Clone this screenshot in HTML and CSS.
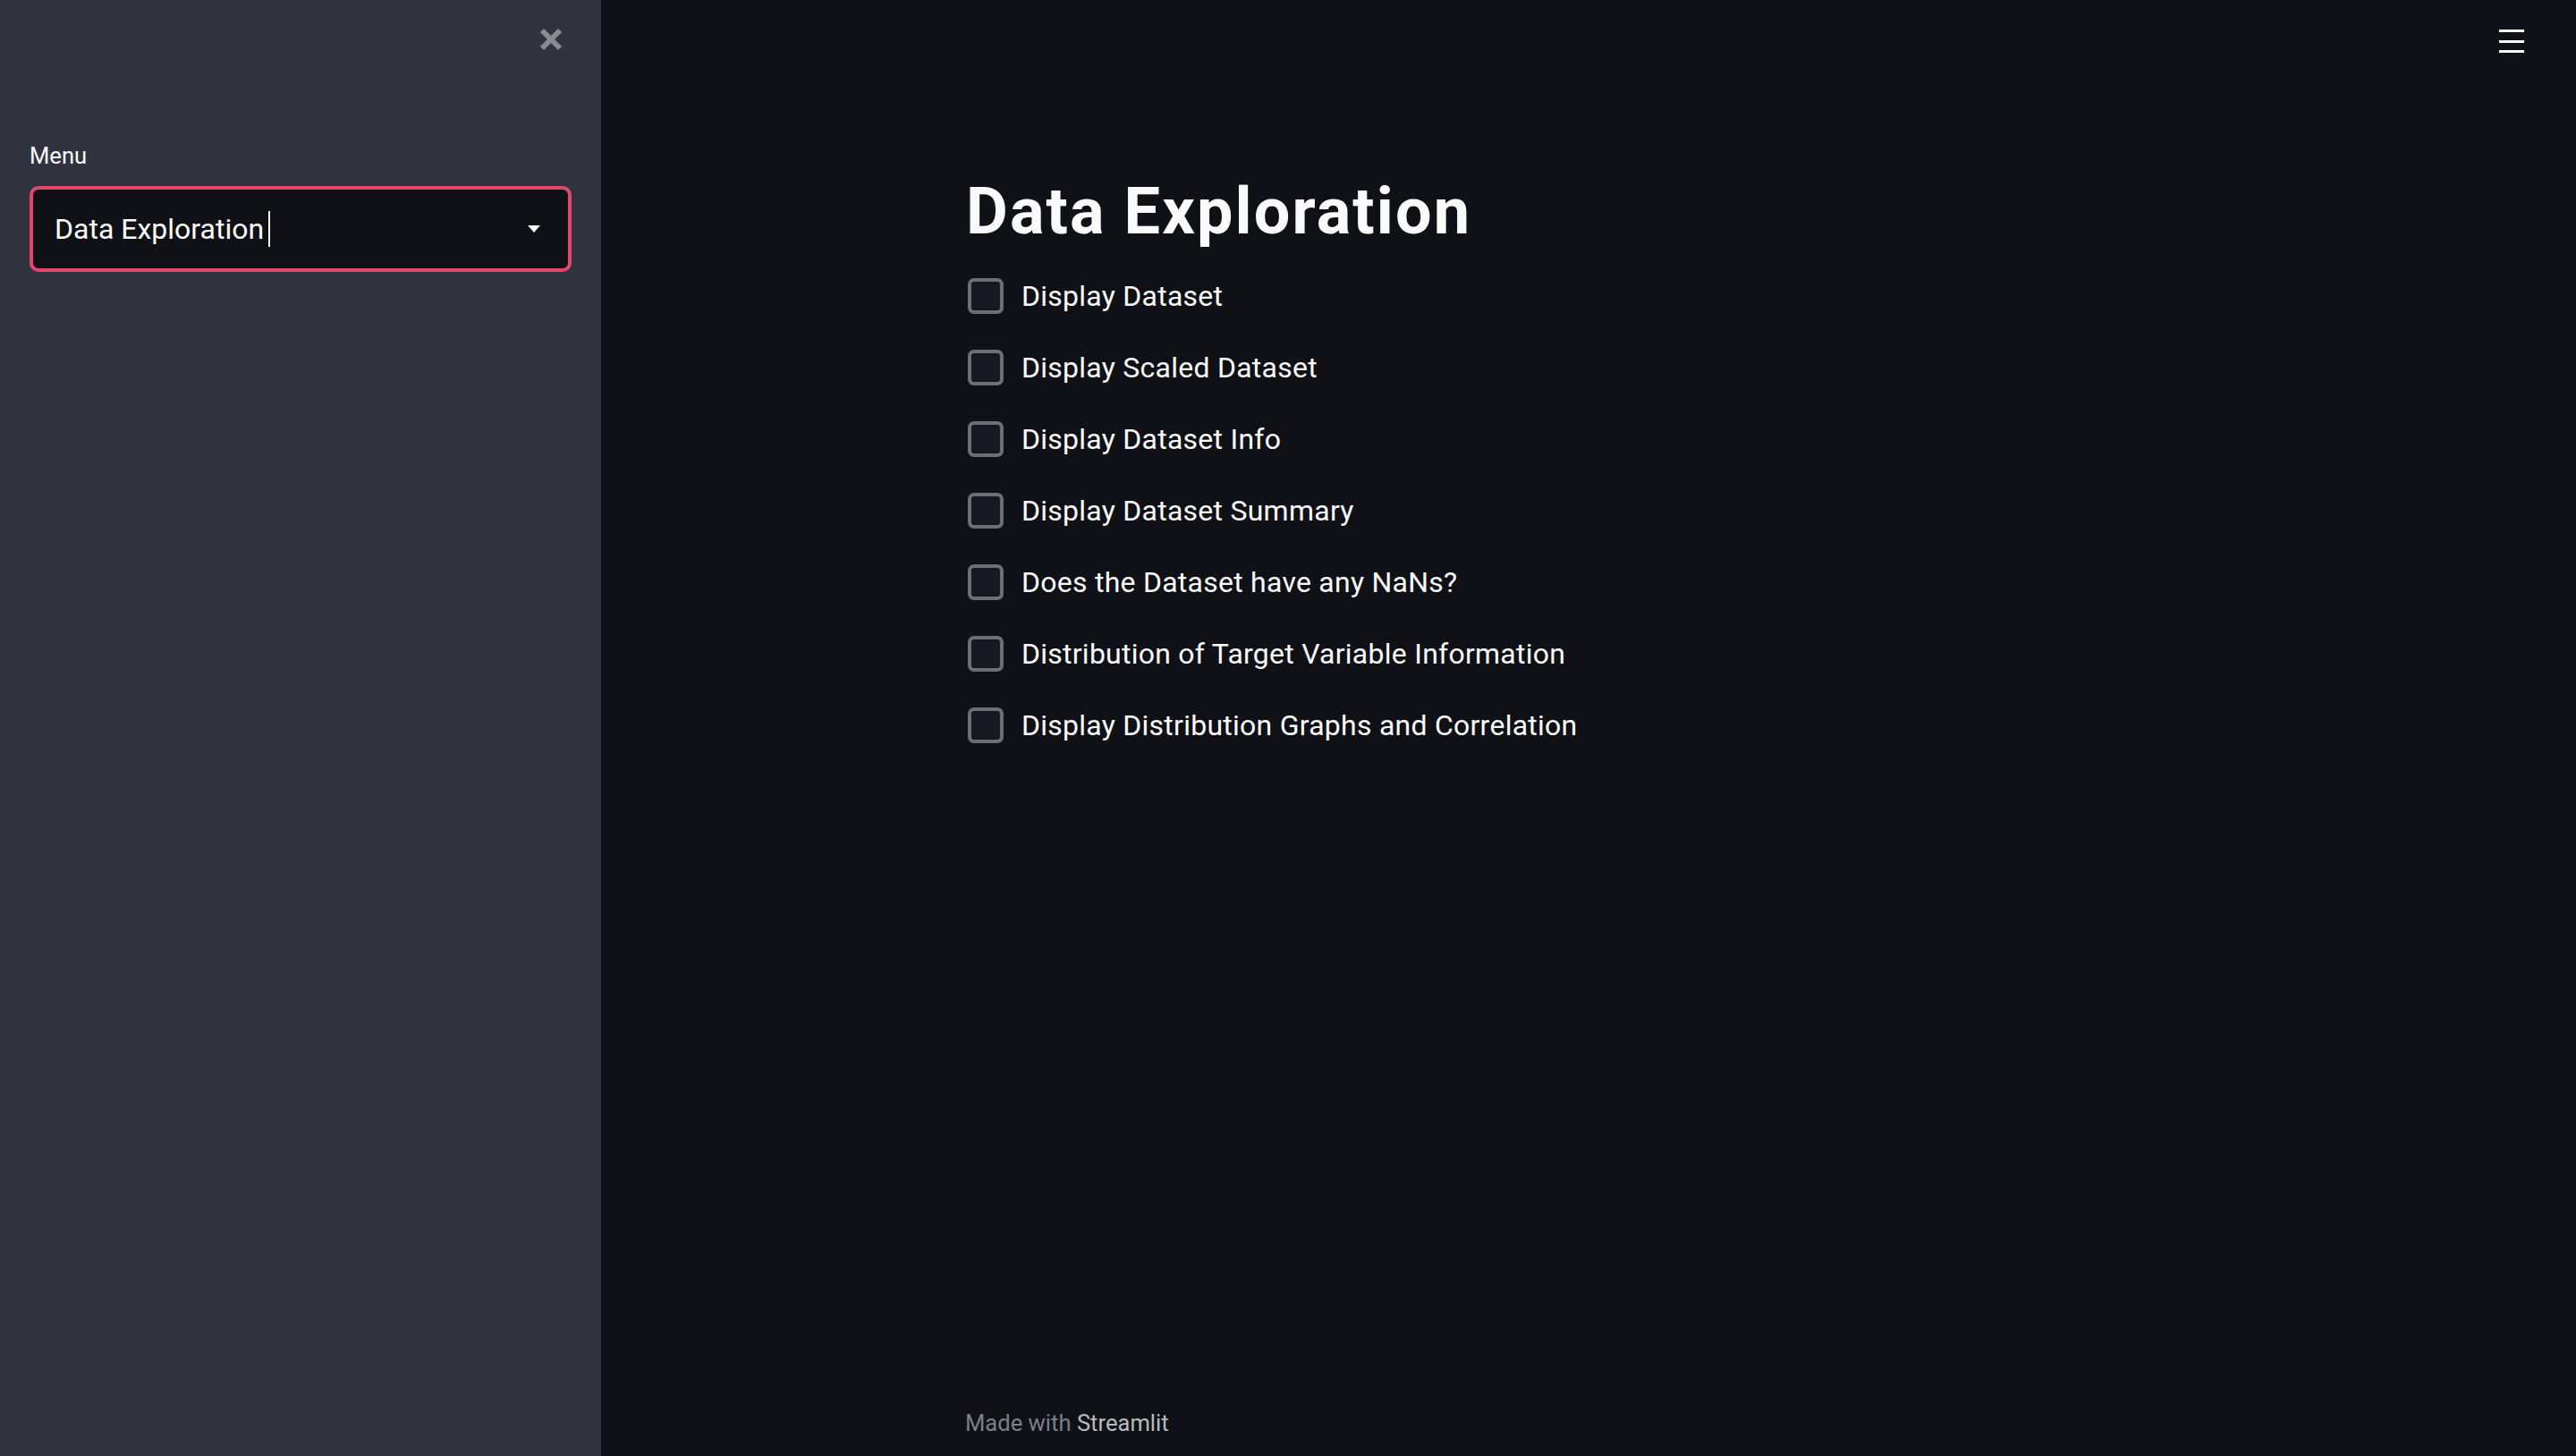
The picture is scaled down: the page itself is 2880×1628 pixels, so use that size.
FILE: index.html
```html
<!DOCTYPE html>
<html lang="en">
<head>
<meta charset="utf-8">
<title>Data Exploration</title>
<link rel="stylesheet" href="styles.css">
</head>
<body>
<div class="app">
  <aside class="sidebar">
    <div class="sidebar-top">
      <button class="close-btn" aria-label="Close sidebar">
        <svg width="28" height="28" viewBox="0 0 28 28"><path d="M4 4 L24 24 M24 4 L4 24" stroke="#8a8b90" stroke-width="6" stroke-linecap="butt"/></svg>
      </button>
    </div>
    <div class="field">
      <label class="field-label">Menu</label>
      <div class="select">
        <span class="select-value">Data Exploration</span><span class="caret"></span>
        <span class="select-arrow">
          <svg width="14" height="8" viewBox="0 0 14 8"><path d="M0 0 H14 L7 8 Z" fill="#fafafa"/></svg>
        </span>
      </div>
    </div>
  </aside>
  <main class="main">
    <div class="toolbar">
      <button class="menu-btn" aria-label="Main menu">
        <span></span><span></span><span></span>
      </button>
    </div>
    <div class="block">
      <h1 class="title">Data Exploration</h1>
      <div class="checks">
        <label class="check"><span class="box"></span><span class="check-text">Display Dataset</span></label>
        <label class="check"><span class="box"></span><span class="check-text">Display Scaled Dataset</span></label>
        <label class="check"><span class="box"></span><span class="check-text">Display Dataset Info</span></label>
        <label class="check"><span class="box"></span><span class="check-text">Display Dataset Summary</span></label>
        <label class="check"><span class="box"></span><span class="check-text">Does the Dataset have any NaNs?</span></label>
        <label class="check"><span class="box"></span><span class="check-text">Distribution of Target Variable Information</span></label>
        <label class="check"><span class="box"></span><span class="check-text">Display Distribution Graphs and Correlation</span></label>
      </div>
    </div>
    <footer class="footer">
      <div class="footer-inner">Made with <span class="brand">Streamlit</span></div>
    </footer>
  </main>
</div>
</body>
</html>
```
FILE: styles.css
```css
* { box-sizing: border-box; }
html, body {
  margin: 0;
  padding: 0;
  height: 100%;
}
body {
  background: #0f1117;
  color: #fafafa;
  font-family: Roboto, "Liberation Sans", sans-serif;
}
.app {
  display: flex;
  height: 1628px;
}
.sidebar {
  width: 672px;
  flex: 0 0 672px;
  background: #31333f;
  padding: 0 33px;
  display: flex;
  flex-direction: column;
}
.sidebar-top {
  display: flex;
  justify-content: flex-end;
  padding-top: 30px;
  padding-right: 9px;
}
.close-btn {
  background: none;
  border: 0;
  padding: 0;
  width: 28px;
  height: 28px;
  display: block;
}
.close-btn svg { display: block; }
.field {
  margin-top: 100px;
  display: flex;
  flex-direction: column;
}
.field-label {
  font-size: 25.6px;
  line-height: 32px;
  color: #fafafa;
  margin-bottom: 18px;
}
.select {
  height: 96px;
  border: 4px solid #e4476a;
  border-radius: 10px;
  background: #101117;
  display: flex;
  align-items: center;
  padding: 0 31px 0 24px;
}
.select-value {
  font-size: 32px;
  line-height: 48px;
  color: #fafafa;
}
.caret {
  width: 2px;
  height: 40px;
  background: #fafafa;
  margin-left: 5px;
}
.select-arrow {
  margin-left: auto;
  display: flex;
  align-items: center;
}
.select-arrow svg { display: block; }
.main {
  flex: 1;
  display: flex;
  flex-direction: column;
  min-width: 0;
}
.toolbar {
  height: 0;
  display: flex;
  justify-content: flex-end;
  padding-right: 58px;
  overflow: visible;
}
.menu-btn {
  background: none;
  border: 0;
  padding: 0;
  margin-top: 33px;
  width: 28px;
  height: 26px;
  display: flex;
  flex-direction: column;
  justify-content: space-between;
}
.menu-btn span {
  display: block;
  height: 3px;
  width: 28px;
  background: #fafafa;
}
.block {
  width: 100%;
  max-width: 1460px;
  margin: 0 auto;
  padding: 194px 34px 0 36px;
}
.title {
  margin: 0 0 27px -2px;
  font-size: 72px;
  line-height: 86px;
  font-weight: 700;
  letter-spacing: 2.1px;
  color: #fafafa;
}
.checks {
  display: flex;
  flex-direction: column;
  gap: 32px;
}
.check {
  display: flex;
  align-items: center;
  height: 48px;
  gap: 20px;
}
.box {
  width: 40px;
  height: 40px;
  flex: 0 0 40px;
  border: 4px solid #6e6f75;
  border-radius: 7px;
  background: #161922;
}
.check-text {
  font-size: 32px;
  line-height: 48px;
  letter-spacing: 0.25px;
  color: #fafafa;
}
.footer {
  margin-top: auto;
  padding-bottom: 21px;
}
.footer-inner {
  max-width: 1460px;
  margin: 0 auto;
  padding: 0 33px;
  font-size: 25.6px;
  line-height: 32px;
  color: #7d7f86;
}
.brand {
  color: #b8babe;
}
```
